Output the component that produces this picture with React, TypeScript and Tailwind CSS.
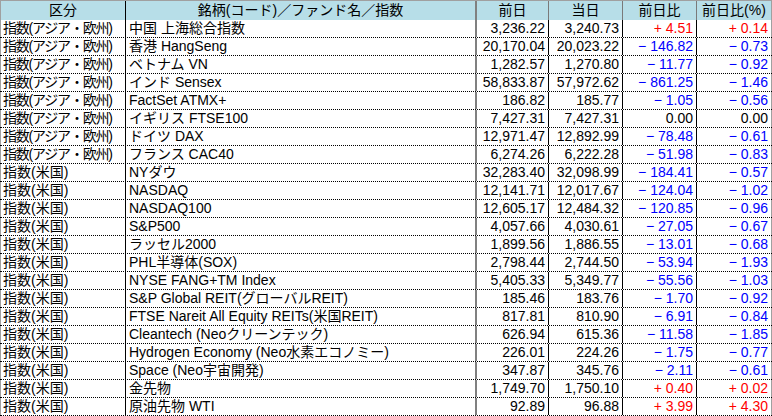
import React from 'react';

/**
 * Market index table (前日比 quote sheet).
 * Excel-like grid: light-blue header, dotted row rules, red/blue change columns.
 */

type Row = {
  kind: string;
  name: string;
  prev: string;
  today: string;
  diff: string;
  pct: string;
};

const ASIA = '指数(アジア・欧州)';
const US = '指数(米国)';

const rows: Row[] = [
  { kind: ASIA, name: '中国 上海総合指数', prev: '3,236.22', today: '3,240.73', diff: '+ 4.51', pct: '+ 0.14' },
  { kind: ASIA, name: '香港 HangSeng', prev: '20,170.04', today: '20,023.22', diff: '− 146.82', pct: '− 0.73' },
  { kind: ASIA, name: 'ベトナム VN', prev: '1,282.57', today: '1,270.80', diff: '− 11.77', pct: '− 0.92' },
  { kind: ASIA, name: 'インド Sensex', prev: '58,833.87', today: '57,972.62', diff: '− 861.25', pct: '− 1.46' },
  { kind: ASIA, name: 'FactSet ATMX+', prev: '186.82', today: '185.77', diff: '− 1.05', pct: '− 0.56' },
  { kind: ASIA, name: 'イギリス FTSE100', prev: '7,427.31', today: '7,427.31', diff: '0.00', pct: '0.00' },
  { kind: ASIA, name: 'ドイツ DAX', prev: '12,971.47', today: '12,892.99', diff: '− 78.48', pct: '− 0.61' },
  { kind: ASIA, name: 'フランス CAC40', prev: '6,274.26', today: '6,222.28', diff: '− 51.98', pct: '− 0.83' },
  { kind: US, name: 'NYダウ', prev: '32,283.40', today: '32,098.99', diff: '− 184.41', pct: '− 0.57' },
  { kind: US, name: 'NASDAQ', prev: '12,141.71', today: '12,017.67', diff: '− 124.04', pct: '− 1.02' },
  { kind: US, name: 'NASDAQ100', prev: '12,605.17', today: '12,484.32', diff: '− 120.85', pct: '− 0.96' },
  { kind: US, name: 'S&P500', prev: '4,057.66', today: '4,030.61', diff: '− 27.05', pct: '− 0.67' },
  { kind: US, name: 'ラッセル2000', prev: '1,899.56', today: '1,886.55', diff: '− 13.01', pct: '− 0.68' },
  { kind: US, name: 'PHL半導体(SOX)', prev: '2,798.44', today: '2,744.50', diff: '− 53.94', pct: '− 1.93' },
  { kind: US, name: 'NYSE FANG+TM Index', prev: '5,405.33', today: '5,349.77', diff: '− 55.56', pct: '− 1.03' },
  { kind: US, name: 'S&P Global REIT(グローバルREIT)', prev: '185.46', today: '183.76', diff: '− 1.70', pct: '− 0.92' },
  { kind: US, name: 'FTSE Nareit All Equity REITs(米国REIT)', prev: '817.81', today: '810.90', diff: '− 6.91', pct: '− 0.84' },
  { kind: US, name: 'Cleantech (Neoクリーンテック)', prev: '626.94', today: '615.36', diff: '− 11.58', pct: '− 1.85' },
  { kind: US, name: 'Hydrogen Economy (Neo水素エコノミー)', prev: '226.01', today: '224.26', diff: '− 1.75', pct: '− 0.77' },
  { kind: US, name: 'Space (Neo宇宙開発)', prev: '347.87', today: '345.76', diff: '− 2.11', pct: '− 0.61' },
  { kind: US, name: '金先物', prev: '1,749.70', today: '1,750.10', diff: '+ 0.40', pct: '+ 0.02' },
  { kind: US, name: '原油先物 WTI', prev: '92.89', today: '96.88', diff: '+ 3.99', pct: '+ 4.30' },
];

const GRID = 'grid grid-cols-[126px_351px_72px_74px_74px_75px]';

function tone(v: string) {
  if (v.startsWith('+')) return 'text-[#ff0000]';
  if (v.startsWith('−')) return 'text-[#0000ff]';
  return 'text-black';
}

export default function App() {
  return (
    <div className="w-[772px] h-[416px] overflow-hidden bg-white font-['Liberation_Sans','Noto_Sans_CJK_JP',sans-serif] text-[14px] leading-[17px] text-black">
      {/* header */}
      <div className={`${GRID} h-[20px] border-t border-[#a0a0a0] bg-[#b7dee8]`}>
        <div className="flex items-center justify-center border-l border-l-[#a0a0a0] border-r border-r-black">区分</div>
        <div className="flex items-center justify-center border-r-2 border-r-[#808080]">銘柄(コード)／ファンド名／指数</div>
        <div className="flex items-center justify-center border-r border-r-[#7a7a7a]">前日</div>
        <div className="flex items-center justify-center border-r border-r-[#7a7a7a]">当日</div>
        <div className="flex items-center justify-center border-r border-r-[#7a7a7a]">前日比</div>
        <div className="flex items-center justify-center whitespace-nowrap border-r border-r-[#a0a0a0]">前日比(%)</div>
      </div>

      {/* body */}
      {rows.map((r) => (
        <div key={r.name} className={`${GRID} h-[18px] border-b border-dotted border-black`}>
          <div
            className={`flex items-center whitespace-nowrap overflow-hidden pl-[2px] border-l border-l-[#a0a0a0] border-r border-r-black ${
              r.kind === ASIA ? 'tracking-[-1.2px]' : ''
            }`}
          >
            {r.kind}
          </div>
          <div className="flex items-center whitespace-nowrap overflow-hidden pl-[3px] border-r-2 border-r-[#808080]">
            {r.name}
          </div>
          <div className="flex items-center justify-end pr-[3px] border-r border-r-black">{r.prev}</div>
          <div className="flex items-center justify-end pr-[3px] border-r border-r-black">{r.today}</div>
          <div className={`flex items-center justify-end whitespace-pre pr-[3px] border-r border-r-black ${tone(r.diff)}`}>
            {r.diff}
          </div>
          <div className={`flex items-center justify-end whitespace-pre pr-[3px] border-r border-r-[#a0a0a0] ${tone(r.pct)}`}>
            {r.pct}
          </div>
        </div>
      ))}
    </div>
  );
}
